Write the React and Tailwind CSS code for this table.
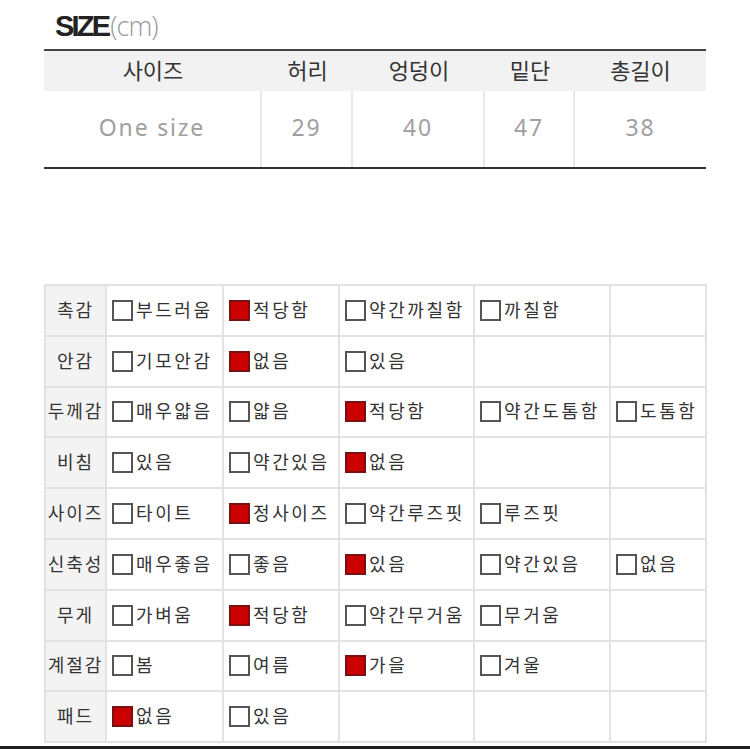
const rows = [
  ["촉감", [["부드러움", 0], ["적당함", 1], ["약간까칠함", 0], ["까칠함", 0], null]],
  ["안감", [["기모안감", 0], ["없음", 1], ["있음", 0], null, null]],
  ["두께감", [["매우얇음", 0], ["얇음", 0], ["적당함", 1], ["약간도톰함", 0], ["도톰함", 0]]],
  ["비침", [["있음", 0], ["약간있음", 0], ["없음", 1], null, null]],
  ["사이즈", [["타이트", 0], ["정사이즈", 1], ["약간루즈핏", 0], ["루즈핏", 0], null]],
  ["신축성", [["매우좋음", 0], ["좋음", 0], ["있음", 1], ["약간있음", 0], ["없음", 0]]],
  ["무게", [["가벼움", 0], ["적당함", 1], ["약간무거움", 0], ["무거움", 0], null]],
  ["계절감", [["봄", 0], ["여름", 0], ["가을", 1], ["겨울", 0], null]],
  ["패드", [["없음", 1], ["있음", 0], null, null, null]],
];

const widths = ["w-[117px]", "w-[116px]", "w-[135px]", "w-[136px]", "w-[96px]"];

function Box({ on }) {
  return on ? (
    <span className="inline-block w-[21px] h-[21px] shrink-0 border-2 border-[#7a1010] bg-[#cc0000]" />
  ) : (
    <span className="inline-block w-[21px] h-[21px] shrink-0 border-2 border-[#555] bg-white" />
  );
}

export default function App() {
  const font = { fontFamily: '"Noto Sans", "Noto Sans CJK KR", sans-serif' };
  return (
    <div className="w-[750px] h-[750px] bg-white relative overflow-hidden" style={font}>
      <div className="pt-[6px] pl-[55px] flex items-end h-[43px]">
        <span className="text-[29px] font-bold tracking-[-2.8px] text-[#222] leading-[34px]" style={{ fontFamily: '"Liberation Sans", sans-serif' }}>SIZE</span>
        <span className="text-[27px] text-[#999] leading-[34px] ml-[2px] tracking-[-1px]" style={{ fontFamily: '"Open Sans", sans-serif', fontWeight: 300 }}>(cm)</span>
      </div>
      <div className="mt-[6px] ml-[44px] w-[662px] border-t-2 border-[#444] border-b-2 border-b-[#333]">
        <div className="flex bg-[#f2f2f2] h-[40px] items-center text-[22px] text-[#333] pb-[2px]">
          <div className="w-[218px] text-center">사이즈</div>
          <div className="w-[91px] text-center">허리</div>
          <div className="w-[132px] text-center">엉덩이</div>
          <div className="w-[90px] text-center">밑단</div>
          <div className="w-[131px] text-center">총길이</div>
        </div>
        <div className="flex h-[76px] items-center text-[23px] text-[#a0a0a0] tracking-[1.8px]">
          <div className="w-[218px] h-full flex items-center justify-center border-r-2 border-[#e8e8e8] pb-[4px]">One size</div>
          <div className="w-[91px] h-full flex items-center justify-center border-r-2 border-[#e8e8e8] pb-[4px]">29</div>
          <div className="w-[132px] h-full flex items-center justify-center border-r-2 border-[#e8e8e8] pb-[4px]">40</div>
          <div className="w-[90px] h-full flex items-center justify-center border-r-2 border-[#e8e8e8] pb-[4px]">47</div>
          <div className="w-[131px] h-full flex items-center justify-center pb-[4px]">38</div>
        </div>
      </div>

      <table className="mt-[115px] ml-[44px] border-collapse border-2 border-[#e2e2e2]">
        <tbody>
          {rows.map(([label, cells], i) => (
            <tr key={i} className="h-[50.8px]">
              <td className="w-[61px] bg-[#f3f3f3] border-2 border-[#e2e2e2] text-center text-[18px] text-[#333] tracking-[2px] p-0 whitespace-nowrap">
                {label}
              </td>
              {cells.map((c, j) => (
                <td key={j} className={`${widths[j]} border-2 border-[#e2e2e2] p-0 pl-[5px]`}>
                  {c && (
                    <div className="flex items-center gap-[3px] text-[18px] text-[#333] tracking-[2.6px] whitespace-nowrap">
                      <Box on={c[1]} />
                      <span>{c[0]}</span>
                    </div>
                  )}
                </td>
              ))}
            </tr>
          ))}
        </tbody>
      </table>
      <div className="absolute left-0 right-0 top-[746px] h-[3px] bg-[#222]" />
    </div>
  );
}
